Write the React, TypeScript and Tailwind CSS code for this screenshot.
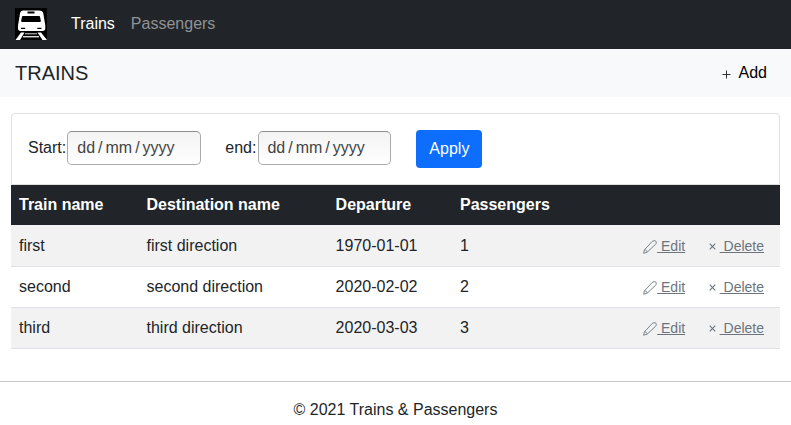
import React from "react";

const trains = [
  { name: "first", destination: "first direction", departure: "1970-01-01", passengers: 1 },
  { name: "second", destination: "second direction", departure: "2020-02-02", passengers: 2 },
  { name: "third", destination: "third direction", departure: "2020-03-03", passengers: 3 },
];

function TrainLogo() {
  return (
    <svg className="-mt-px h-8 w-8" viewBox="0 0 32 32" aria-hidden="true">
      <rect width="32" height="32" fill="#000" />
      <path
        fill="#fff"
        fillRule="evenodd"
        d="M8 2.500h16c2.500 0 4 1 4.300 3l2 12v3c0 1.500-1 2.500-2.700 2.500H5.500C3.800 23 3 22 3 20.500v-3l2-12c.3-2 1.500-3 3-3zM12.500 3.500v2h7v-2zM8.300 8c-.9 0-1.300.4-1.400 1.200l-.7 3.300c-.1 1 .3 1.500 1.300 1.500h17c1 0 1.400-.5 1.300-1.500l-.7-3.300c-.1-.8-.5-1.200-1.400-1.200zM6 19.800v1.200h4.200v-1.200zM26.500 19.800v1.200h-4.200v-1.200z"
      />
      <path fill="#fff" d="M6 24.500h3.500L5 32H.5zM22.500 24.500h3.500l6 7.500h-4.500z" />
      <path stroke="#999" strokeWidth="1.400" d="M10 25.700h12" />
      <path stroke="#ddd" strokeWidth="1.400" d="M8 28.700h16" />
    </svg>
  );
}

function Pencil() {
  return (
    <svg className="mt-0.5 h-[14px] w-[14px] shrink-0" viewBox="0 0 14 14" fill="none" stroke="#7b838a" strokeWidth="1" strokeLinejoin="round" aria-hidden="true">
      <path d="M.7 13.300l.6-3.300L9 1.700c1.200-1.100 2.900-1.300 3.900-.5.700.9.500 2.200-.5 3.300L4.300 12zM1.700 9.700c1.300.3 2.200 1 2.600 2.300" />
    </svg>
  );
}

function Cross() {
  return (
    <svg className="mt-0.5 mr-1 h-[7px] w-[7px] shrink-0" viewBox="0 0 7 7" stroke="#6c757d" strokeWidth="1.100" aria-hidden="true">
      <path d="M.7 .7l5.600 5.600M6.300 .7l-5.600 5.600" />
    </svg>
  );
}

function DateField({ label, width }: { label: string; width: string }) {
  return (
    <label className="flex items-center">
      <span>{label}</span>
      <span className={`${width} flex h-[34px] items-center rounded-[5px] border border-[#aaa] border-t-[#8f8f8f] bg-gradient-to-b from-[#f3f3f3] to-white text-[#444]`}>
        <span>dd</span>
        <span className="mx-[3px]">/</span>
        <span>mm</span>
        <span className="mx-[3px]">/</span>
        <span>yyyy</span>
      </span>
    </label>
  );
}

export default function App() {
  return (
    <div className="min-h-[425px] w-full bg-white font-['Liberation_Sans',Arial,sans-serif] text-base leading-6 text-[#212529]">
      <nav className="flex h-[49px] items-center bg-[#212529] pl-[15px]">
        <TrainLogo />
        <a className="ml-6 -mt-0.5 text-white">Trains</a>
        <a className="ml-4 -mt-0.5 text-[#909294]">Passengers</a>
      </nav>
      <header className="flex h-12 items-center justify-between bg-[#f8f9fa] pr-6 pl-[15px]">
        <h1 className="text-xl">TRAINS</h1>
        <button className="flex items-center text-black">
          <svg className="mt-0.5 mr-2 h-[9px] w-[9px]" viewBox="0 0 9 9" stroke="#333" aria-hidden="true">
            <path d="M4.500 .5v8M.5 4.500h8" />
          </svg>
          Add
        </button>
      </header>
      <main className="mx-[11px] mt-4">
        <form className="flex h-[72px] items-center rounded-t border border-[#dfdfdf] pb-0.5 pl-4">
          <DateField label="Start:" width="ml-px w-[134px] pl-[9px]" />
          <span className="w-6" />
          <DateField label="end:" width="ml-0.5 w-[133px] pl-2" />
          <button type="button" className="mt-0.5 ml-[25px] h-[38px] w-[66px] rounded bg-[#0d6efd] text-white">Apply</button>
        </form>
        <table className="w-full table-fixed border-collapse text-left">
          <colgroup>
            <col className="w-[128px]" />
            <col className="w-[189px]" />
            <col className="w-[124px]" />
            <col className="w-[146px]" />
            <col />
          </colgroup>
          <thead className="bg-[#212529] text-white">
            <tr className="h-10">
              <th className="px-2">Train name</th>
              <th className="pr-2 pl-[7.500px]">Destination name</th>
              <th className="pr-2 pl-[7.600px]">Departure</th>
              <th className="px-2">Passengers</th>
              <th />
            </tr>
          </thead>
          <tbody>
            {trains.map((t) => (
              <tr key={t.name} className="h-[41px] border-b border-[#dee2e6] odd:bg-[#f2f2f2] first:[&>td]:pt-px">
                <td className="px-2">{t.name}</td>
                <td className="pr-2 pl-[7.500px]">{t.destination}</td>
                <td className="pr-2 pl-[7.600px]">{t.departure}</td>
                <td className="px-2">{t.passengers}</td>
                <td className="pr-4">
                  <div className="flex items-center justify-end text-sm text-[#6c757d]">
                    <Pencil />
                    <a className="whitespace-pre underline"> Edit</a>
                    <span className="w-[23.500px]" />
                    <Cross />
                    <a className="whitespace-pre underline"> Delete</a>
                  </div>
                </td>
              </tr>
            ))}
          </tbody>
        </table>
      </main>
      <footer className="mt-8 border-t border-[#c8c9ca] pt-4 text-center">© 2021 Trains &amp; Passengers</footer>
    </div>
  );
}
